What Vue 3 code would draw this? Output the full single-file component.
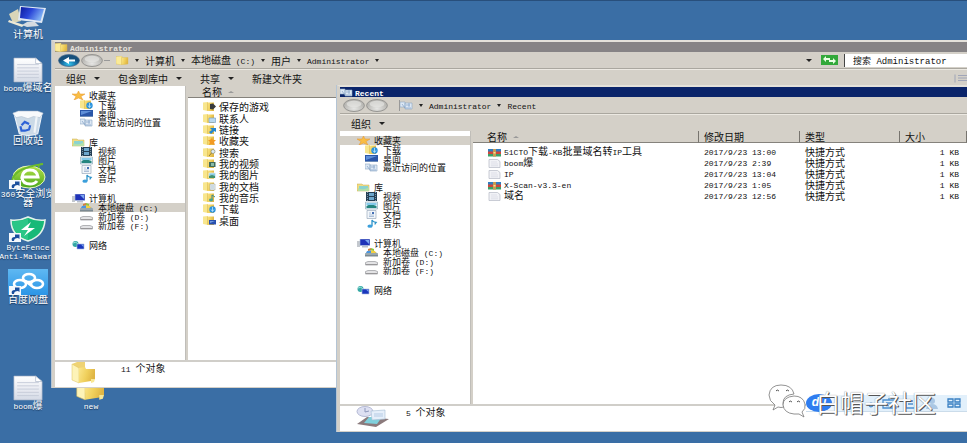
<script setup>
import { h } from 'vue'

// Splits a label into CJK and Latin runs so each gets its own face and size.
const Mixed = (props) =>
  h(
    'span',
    { class: 'mixed' },
    props.text
      .split(/([\x20-\x7e]+)/)
      .filter(Boolean)
      .map((run) => (/^[\x20-\x7e]/.test(run) ? h('span', { class: 'latin' }, run) : run)),
  )
Mixed.props = ['text']

const desktop = [
  { icon: 'pc', label: '计算机', row: 1, col: 1 },
  { icon: 'page', label: 'boom爆域名', row: 2, col: 1 },
  { icon: 'bin', label: '回收站', row: 3, col: 1 },
  { icon: 'browser', label: '360安全浏览\n器', row: 4, col: 1, link: true },
  { icon: 'shield', label: 'ByteFence\nAnti-Malware', row: 5, col: 1, link: true },
  { icon: 'cloud', label: '百度网盘', row: 6, col: 1, link: true },
  { icon: 'page', label: 'boom爆', row: 8, col: 1 },
  { icon: 'folderbig', label: 'new', row: 8, col: 2 },
]

const tree = [
  [['star', '收藏夹'], ['f-down', '下载'], ['desk', '桌面'], ['recent', '最近访问的位置']],
  [['lib', '库'], ['video', '视频'], ['image', '图片'], ['doc', '文档'], ['music', '音乐']],
  [['mini-pc', '计算机'], ['sysdrive', '本地磁盘 (C:)'], ['drive', '新加卷 (D:)'], ['drive', '新加卷 (F:)']],
  [['net', '网络']],
]

const folders = [
  ['game', '保存的游戏'], ['contact', '联系人'], ['link', '链接'], ['fav', '收藏夹'],
  ['search', '搜索'], ['fvideo', '我的视频'], ['fimage', '我的图片'], ['fdoc', '我的文档'],
  ['fmusic', '我的音乐'], ['f-down', '下载'], ['fdesk', '桌面'],
]

const crumbs = ['计算机', '本地磁盘 (C:)', '用户', 'Administrator']
const commands = [['组织', true], ['包含到库中', true], ['共享', true], ['新建文件夹', false]]

const files = [
  ['rar', '51CTO下载-KB批量域名转IP工具', '2017/9/23 13:00'],
  ['file', 'boom爆', '2017/9/23 2:39'],
  ['file', 'IP', '2017/9/23 13:04'],
  ['rar', 'X-Scan-v3.3-en', '2017/9/23 1:05'],
  ['file', '域名', '2017/9/23 12:56'],
]
</script>

<template>
  <main class="screen">
    <svg width="0" height="0" class="defs" aria-hidden="true">
      <defs>
        <linearGradient id="g-folder" x1="0" x2="1" y2="0.3"><stop offset="0" stop-color="#fbe68c" /><stop offset="0.55" stop-color="#f0d05c" /><stop offset="1" stop-color="#dfb544" /></linearGradient>
        <linearGradient id="g-screen" x1="0" x2="1" y2="0.4"><stop offset="0" stop-color="#0a1a9c" /><stop offset="0.5" stop-color="#2a46d8" /><stop offset="1" stop-color="#7fb0f4" /></linearGradient>
        <linearGradient id="g-page" x2="0" y2="1"><stop offset="0" stop-color="#fff" /><stop offset="1" stop-color="#d5dae6" /></linearGradient>
        <radialGradient id="g-back" cy="0.8"><stop offset="0" stop-color="#36c6ee" /><stop offset="0.6" stop-color="#1779ae" /><stop offset="1" stop-color="#17517c" /></radialGradient>
        <radialGradient id="g-fwd" cy="0.75"><stop offset="0" stop-color="#e6e6e4" /><stop offset="1" stop-color="#b9b8b4" /></radialGradient>
        <linearGradient id="g-green" x2="0" y2="1"><stop offset="0" stop-color="#b6e24a" /><stop offset="1" stop-color="#4aa81c" /></linearGradient>
        <linearGradient id="g-sky" x2="0" y2="1"><stop offset="0" stop-color="#5fb8f2" /><stop offset="1" stop-color="#2b95e6" /></linearGradient>
      </defs>
      <symbol id="base" viewBox="0 0 13 9"><path d="M0 .5 5 0v9L0 8z" fill="#f8e68e" /><path d="M4 .5h7V9H4z" fill="url(#g-folder)" /><path d="M4.500.5v8" stroke="#d8b650" stroke-width=".5" /></symbol>
      <symbol id="folder" viewBox="0 0 13 9"><path d="M0 .5 6 0v9L0 8z" fill="#fbeb98" stroke="#d9ba55" stroke-width=".4" /><path d="M5.500 1.500H12V8l-6.500.8z" fill="url(#g-folder)" stroke="#d9ba55" stroke-width=".4" /></symbol>
      <symbol id="folderbig" viewBox="0 0 26 22"><path d="M1 2 6 0h8v15H6z" fill="#efd374" /><path d="M1 2 8 6v15L1 18z" fill="#fdf3b8" stroke="#dfc05c" stroke-width=".5" /><path d="M8 6l6-1 1 2h9v10l-4 2-12 2z" fill="url(#g-folder)" /><path d="M20 17h4l-1 3-3 1z" fill="#f8e794" /></symbol>
      <symbol id="pc" viewBox="0 0 40 24"><path d="M1 9 10 4l3 12-8 2z" fill="#d9d5b8" /><path d="M12 1 38 3l-4 15-24-3z" fill="#dfe8f4" /><path d="M13 2 36 4l-3.500 12L12 13z" fill="url(#g-screen)" /><path d="M19 17h8l4 4-12 1-5-2z" fill="#d5dbe0" /><path d="M1 15l15 5-2 2L0 17z" fill="#ece9d6" /></symbol>
      <symbol id="page" viewBox="0 0 28 24"><path d="M1 1h20l6 5v17H1z" fill="url(#g-page)" stroke="#a9b3c6" stroke-width=".6" /><path d="M21 1l6 5h-6z" fill="#fff" stroke="#a9b3c6" stroke-width=".6" /><path d="M4 7h20M4 10h20M4 13h20M4 16h20M4 19h20" stroke="#c4cad8" stroke-width=".8" /></symbol>
      <symbol id="bin" viewBox="0 0 30 24"><path d="M2 3h26l-4 19q-9 3-17 0z" fill="#d3dfea" fill-opacity=".95" stroke="#eef4fa" /><path d="M1 3 6 1h18l5 2-3 4-6-1-5 2-6-2-5 1z" fill="#f8fafc" stroke="#aebccc" stroke-width=".5" /><path d="M9 14l3-3 4 2M8 15l1 4h4M17 14l-1 4-3 1" fill="none" stroke="#2d62d6" stroke-width="2" /><path d="M23 6l-2 15" stroke="#fff" stroke-opacity=".7" stroke-width="2" /></symbol>
      <symbol id="browser" viewBox="0 0 38 26"><ellipse cx="20" cy="14" rx="16" ry="11" fill="url(#g-green)" stroke="#e6f7c0" /><path d="M29 14H13q1-7 8-7 7 0 8 7zM13 15q1 6 8 6 5 0 7-3" fill="none" stroke="#fff" stroke-width="3" /><path d="M3 18Q5 5 34 1q-6 0-4 4" fill="none" stroke="#6bbb2b" stroke-width="1.800" /></symbol>
      <symbol id="shield" viewBox="0 0 38 26"><path d="M19 1q8 4 17 3-1 16-17 21Q2 20 2 4q9 1 17-3z" fill="#17b978" stroke="#e2f2ea" stroke-width="1.600" /><path d="M19 2v22Q4 19 3 5q9 1 16-3z" fill="#35cc8d" fill-opacity=".7" /><path d="M22 6l-10 8h7l-4 6 11-8h-7z" fill="#fff" /></symbol>
      <symbol id="cloud" viewBox="0 0 40 26"><path d="M0 0h40v26H0z" fill="url(#g-sky)" /><g fill="none" stroke="#fff" stroke-width="2.600"><ellipse cx="21" cy="9" rx="6" ry="4" /><ellipse cx="12" cy="15" rx="6" ry="4" /><ellipse cx="29" cy="15" rx="6" ry="4" /><path d="M17 12l7 5" /></g></symbol>
      <symbol id="shortcut" viewBox="0 0 12 9"><path d="M0 0h12v9H0z" fill="#f4f8fc" /><path d="M3 8Q1.500 4 6 4V1.500h4.500V6L9 5Q5 5 5 8z" fill="#1a4f9e" /></symbol>
      <symbol id="star" viewBox="0 0 13 9"><path d="M6.500 0 8 3h5L9 5.500 11 9 6.500 7 2 9l2-3.500L0 3h5z" fill="#f8bd45" stroke="#e8952a" stroke-width=".5" /></symbol>
      <symbol id="f-down" viewBox="0 0 13 9"><use href="#base" /><circle cx="9.500" cy="5.500" r="3.200" fill="#2c94de" /><path d="M9.500 3v4M8 5.500l1.500 2 1.500-2" stroke="#d5f0ff" fill="none" stroke-width=".7" /></symbol>
      <symbol id="desk" viewBox="0 0 13 9"><path d="M0 1h13v7H0z" fill="#2a56a8" /><path d="M1 2h11L1 6z" fill="#5f8fd8" /><path d="M0 7h13v1H0z" fill="#6f8db8" /></symbol>
      <symbol id="recent" viewBox="0 0 13 9"><path d="M0 1h5v5H0zM5 2h7v6H5z" fill="#dde8f4" stroke="#8ba5c5" stroke-width=".6" /><path d="M2 3l3 4h6M6 4h4M9 2v4" stroke="#7f9fc6" fill="none" stroke-width=".7" /></symbol>
      <symbol id="lib" viewBox="0 0 13 9"><path d="M0 1h5l1 1h6v6H0z" fill="#f1dc83" stroke="#c9ad52" stroke-width=".5" /><path d="M2 3h9v4H2z" fill="#8bd3cf" /><path d="M1 5q6 3 11-1v4H1z" fill="#b4dfa6" /></symbol>
      <symbol id="video" viewBox="0 0 13 9"><path d="M1 0h11v9H1z" fill="#243e54" /><path d="M4 1h5v3H4zM4 5h5v3H4z" fill="#6da6cc" /><path d="M2.500 0v9M10.500 0v9" stroke="#8fa9bb" stroke-dasharray="1 1" stroke-width=".8" /></symbol>
      <symbol id="image" viewBox="0 0 13 9"><path d="M.5 1h12v7H.5z" fill="#e4f3fa" stroke="#829fb0" stroke-width=".6" /><path d="M1.500 5q4-3 10 0v2h-10z" fill="#24857f" /><path d="M1.500 2h10v2h-10z" fill="#84c9ea" /></symbol>
      <symbol id="doc" viewBox="0 0 13 9"><path d="M2 .5h9v8H2z" fill="#f2f6fa" stroke="#8b9db2" stroke-width=".6" /><path d="M4 3h2M4 5h5M4 6.500h5" stroke="#8fa9c8" stroke-width=".7" /><path d="M7 2h2v2H7z" fill="#446fb5" /></symbol>
      <symbol id="music" viewBox="0 0 13 9"><path d="M7 7V1q1 2 4 2.500-1 1-1 2" stroke="#2c93ca" stroke-width="1.300" fill="none" /><ellipse cx="5" cy="7.200" rx="2.600" ry="1.600" fill="#3b9fdb" /></symbol>
      <symbol id="mini-pc" viewBox="0 0 13 9"><path d="M0 2h3v6H0z" fill="#c4c8ce" /><path d="M3 0h10v6.500H3z" fill="#1f32b8" stroke="#b4c3dc" stroke-width=".6" /><path d="M8 1h4v4z" fill="#7ba5f0" /><path d="M5 7h6v1.500H5z" fill="#b8bfca" /></symbol>
      <symbol id="sysdrive" viewBox="0 0 13 9"><path d="M0 5.500 3 4h7l3 1.500v3H0z" fill="#7c8a92" /><path d="M0 5.500h13v1H0z" fill="#b9c4c6" /><path d="M3 1l3-1v2.500L3 3z" fill="#d7813c" /><path d="M6 0l3 1v2L6 2.500z" fill="#8ec63f" /><path d="M2 3l4-.5V5H1z" fill="#4b96de" /><path d="M6 2.500l4 .5 1 2H6z" fill="#f4cf43" /></symbol>
      <symbol id="drive" viewBox="0 0 13 9"><path d="M.5 5.500 3 4.500h7l2.500 1V8H.5z" fill="#e3e3e5" stroke="#98999d" stroke-width=".7" /><path d="M1 7.500h11" stroke="#8c8a8c" stroke-width=".8" /></symbol>
      <symbol id="net" viewBox="0 0 13 9"><circle cx="3.500" cy="3" r="3" fill="#33a8a4" /><path d="M1 2q3-2 5 1" stroke="#a2e4df" fill="none" /><path d="M5 3h7v5H5z" fill="#1a37bd" stroke="#a9bbdf" stroke-width=".6" /><path d="M9 3.500h2.500V6z" fill="#7fa8f0" /></symbol>
      <symbol id="game" viewBox="0 0 13 9"><use href="#base" /><path d="M7 2l3-.5 3 3-3 3-3-.5z" fill="#383a3c" /></symbol>
      <symbol id="contact" viewBox="0 0 13 9"><use href="#base" /><path d="M6 4h6.500v4.500H6z" fill="#b9d9f0" stroke="#6e99c0" stroke-width=".6" /></symbol>
      <symbol id="link" viewBox="0 0 13 9"><use href="#base" /><path d="M7 3h6v4l-2-1-3 3-2-2 3-2z" fill="#2487d0" /></symbol>
      <symbol id="fav" viewBox="0 0 13 9"><use href="#base" /><path d="M9 2l1 2h3l-2 2 1 3-3-1-3 1 1-3-2-2h2z" fill="#f39a22" /></symbol>
      <symbol id="search" viewBox="0 0 13 9"><use href="#base" /><circle cx="10" cy="3.500" r="2" fill="#dcecf4" stroke="#8d8c75" stroke-width=".7" /><path d="M8.500 5 6 8" stroke="#8d7a43" /></symbol>
      <symbol id="fvideo" viewBox="0 0 13 9"><use href="#base" /><path d="M6 3h6.500v5H6z" fill="#416c5c" /><path d="M8 4h3v3H8z" fill="#89bba8" /></symbol>
      <symbol id="fimage" viewBox="0 0 13 9"><use href="#base" /><path d="M6 3h6.500v5H6z" fill="#8ecbe3" stroke="#e7f3f6" stroke-width=".7" /><path d="M6 6l3-1 3 1v2H6z" fill="#42926f" /></symbol>
      <symbol id="fdoc" viewBox="0 0 13 9"><use href="#base" /><path d="M7 2h5v6H7z" fill="#eef3f4" stroke="#9aa8a8" stroke-width=".6" /><path d="M8 4h3M8 6h3" stroke="#7da2bd" stroke-width=".6" /></symbol>
      <symbol id="fmusic" viewBox="0 0 13 9"><use href="#base" /><path d="M9 7V2l3 2" stroke="#368c92" fill="none" /><ellipse cx="8" cy="7" rx="2" ry="1.400" fill="#45a392" /></symbol>
      <symbol id="fdesk" viewBox="0 0 13 9"><use href="#base" /><path d="M6 4h7v4.500H6z" fill="#284fae" /><path d="M7 5h5l-5 2z" fill="#719be0" /></symbol>
      <symbol id="rar" viewBox="0 0 13 9"><path d="M0 1h13v3H0z" fill="#317dc0" /><path d="M0 3.500h13v2.500H0z" fill="#d0473b" /><path d="M0 6h13v2.500H0z" fill="#3ba068" /><path d="M5 1h3v7.500H5z" fill="#c99b50" /><path d="M5.500 4h2v1.500h-2z" fill="#f3df8d" /></symbol>
      <symbol id="file" viewBox="0 0 13 9"><path d="M1 .5h8.500L12 2.500v6H1z" fill="#f1f2f6" stroke="#b4b9c4" stroke-width=".7" /><path d="M3 3h6M3 5h7M3 6.800h7" stroke="#d6d9e2" stroke-width=".7" /></symbol>
      <symbol id="recentbig" viewBox="0 0 34 22"><path d="M1 18l10-7 22 2-13 8z" fill="#8b7a7c" /><path d="M8 17l5-6 13 0-5 7z" fill="#7fd0dc" /><ellipse cx="9" cy="5.500" rx="8" ry="5" fill="#dde0f2" stroke="#b4b9d4" /><path d="M9 2v4l4-1" stroke="#8d98bb" fill="none" /><path d="M15 5l14-1v9l-13 1z" fill="#e6effa" stroke="#a5bdd3" stroke-width=".6" /><path d="M18 8h9M18 10h9" stroke="#b5cbe4" /></symbol>
      <symbol id="back" viewBox="0 0 22 13"><ellipse cx="11" cy="6.500" rx="10.500" ry="6" fill="url(#g-back)" stroke="#46698a" stroke-width=".7" /><path d="M5 6.500 11 3v2.500h6v2h-6V10z" fill="#fff" /></symbol>
      <symbol id="round" viewBox="0 0 22 13"><ellipse cx="11" cy="6.500" rx="10.400" ry="6" fill="url(#g-fwd)" stroke="#908f8c" stroke-width=".9" /><ellipse cx="11" cy="5" rx="7.500" ry="3.300" fill="#e6e5e2" fill-opacity=".7" /></symbol>
      <symbol id="refresh" viewBox="0 0 17 10"><path d="M0 0h17v10H0z" fill="#32a83a" /><path d="M2 4l3-3v2h4v2H5v2zM15 6l-3 3V7H8V5h4V3z" fill="#eaffe4" /></symbol>
      <symbol id="views" viewBox="0 0 13 8"><path d="M1 0v8M4 1h9M4 3.500h9M4 6h9" stroke="#9aa0b6" stroke-width=".9" /></symbol>
      <symbol id="bubbles" viewBox="0 0 38 34"><g fill="#fff" stroke="#777" stroke-width=".8"><path d="M7 21Q1 17 1 11 2 1 13 1q11 0 13 9-11 1-11 9 0 2 1 4-3 1-6 0l-5 3z" /><path d="M34 28q4-3 3-8-2-8-11-8-11 1-11 9 1 8 11 9h5l5 3z" /></g><path d="M8 7q1-2 3 0M18 7q1-2 3 0M21 18q1-2 3 0M29 18q1-2 3 0" fill="none" stroke="#555" /></symbol>
      <symbol id="du" viewBox="0 0 26 18"><ellipse cx="13" cy="9" rx="13" ry="9" fill="#2f7df0" /></symbol>
      <symbol id="keys" viewBox="0 0 74 12"><g fill="none" stroke="#4d90cf" stroke-width="1.300"><circle cx="5" cy="8" r="1.800" /><path d="M17 3h13v8H17zM20 6h7M20 8.500h7M23 1v2M40 1v10h9V1M42 4h5M42 7h5" /></g><circle cx="66" cy="4" r="3" fill="#a9c7e4" /><path d="M60 12q1-5 6-5t6 5z" fill="#a9c7e4" /></symbol>
      <symbol id="grid" viewBox="0 0 14 10"><path d="M1 1h5v3H1zM8 1h5v3H8zM1 6h5v3H1zM8 6h5v3H8z" fill="none" stroke="#397fc2" stroke-width="1.300" /></symbol>
    </svg>

    <nav class="desktop" aria-label="桌面">
      <a v-for="(d, i) in desktop" :key="i" href="#" class="shortcut" :style="{ gridRow: d.row, gridColumn: d.col }">
        <span class="shortcut-art">
          <svg class="art"><use :href="'#' + d.icon" /></svg>
          <svg v-if="d.link" class="badge"><use href="#shortcut" /></svg>
        </span>
        <Mixed class="shortcut-label" :text="d.label" />
      </a>
    </nav>

    <section class="window window-back">
      <header class="title title-idle"><svg class="ico"><use href="#folder" /></svg><Mixed text="Administrator" /></header>
      <div class="address">
        <button class="nav" aria-label="后退"><svg><use href="#back" /></svg></button>
        <button class="nav" aria-label="前进"><svg><use href="#round" /></svg></button>
        <i class="dash"></i>
        <div class="path">
          <svg class="ico"><use href="#folder" /></svg>
          <i class="caret"></i>
          <template v-for="c in crumbs" :key="c"><a href="#"><Mixed :text="c" /></a><i class="caret"></i></template>
        </div>
        <i class="caret wide"></i>
        <button class="refresh" aria-label="刷新"><svg><use href="#refresh" /></svg></button>
        <input class="query" type="text" value="搜索 Administrator" aria-label="搜索" />
      </div>
      <div class="commands">
        <button v-for="[label, menu] in commands" :key="label"><Mixed :text="label" /><i v-if="menu" class="caret wide"></i></button>
        <svg class="ico views"><use href="#views" /></svg>
      </div>
      <div class="body">
        <aside class="tree">
          <ul v-for="(group, g) in tree" :key="g">
            <li v-for="([icon, label], n) in group" :key="n" :class="{ child: n > 0, chosen: g === 2 && n === 1 }">
              <svg class="ico"><use :href="'#' + icon" /></svg><Mixed :text="label" />
            </li>
          </ul>
        </aside>
        <div class="pane">
          <div class="heading"><Mixed text="名称" /><i class="sort"></i></div>
          <ul class="folders">
            <li v-for="[icon, label] in folders" :key="label"><svg class="ico"><use :href="'#' + icon" /></svg><Mixed :text="label" /></li>
          </ul>
        </div>
      </div>
      <footer class="status"><svg class="status-art"><use href="#folderbig" /></svg><Mixed text="11 个对象" /></footer>
    </section>

    <section class="window window-front">
      <header class="title title-active"><svg class="ico"><use href="#recent" /></svg><Mixed text="Recent" /></header>
      <div class="address">
        <button class="nav" aria-label="后退"><svg><use href="#round" /></svg></button>
        <button class="nav" aria-label="前进"><svg><use href="#round" /></svg></button>
        <div class="path">
          <svg class="ico"><use href="#recent" /></svg>
          <i class="caret"></i><a href="#"><Mixed text="Administrator" /></a>
          <i class="caret"></i><a href="#"><Mixed text="Recent" /></a>
        </div>
      </div>
      <div class="commands"><button><Mixed text="组织" /><i class="caret wide"></i></button></div>
      <div class="body">
        <aside class="tree">
          <ul v-for="(group, g) in tree" :key="g">
            <li v-for="([icon, label], n) in group" :key="n" :class="{ child: n > 0, chosen: g === 0 && n === 0 }">
              <svg class="ico"><use :href="'#' + icon" /></svg><Mixed :text="label" />
            </li>
          </ul>
        </aside>
        <div class="pane">
          <table class="files">
            <thead>
              <tr><th class="c-name"><Mixed text="名称" /><i class="sort"></i></th><th class="c-date"><Mixed text="修改日期" /></th><th class="c-type"><Mixed text="类型" /></th><th class="c-size"><Mixed text="大小" /></th></tr>
            </thead>
            <tbody>
              <tr v-for="[icon, name, date] in files" :key="name">
                <td class="c-name"><svg class="ico"><use :href="'#' + icon" /></svg><Mixed :text="name" /></td>
                <td><Mixed :text="date" /></td>
                <td><Mixed text="快捷方式" /></td>
                <td class="size"><Mixed text="1 KB" /></td>
              </tr>
            </tbody>
          </table>
        </div>
      </div>
      <footer class="status"><svg class="status-art"><use href="#recentbig" /></svg><Mixed text="5 个对象" /></footer>
    </section>

    <div class="ime">
      <span class="du"><svg><use href="#du" /></svg><b>du</b></span>
      <svg class="keys"><use href="#keys" /></svg>
      <svg class="grid"><use href="#grid" /></svg>
    </div>
    <div class="brand"><svg><use href="#bubbles" /></svg><span>白帽子社区</span></div>
  </main>
</template>

<style>
body { margin: 0; }
.mixed { white-space: pre; }
.mixed .latin { font-family: "Liberation Mono", monospace; font-size: 8px; }
</style>

<style scoped>
.screen {
  position: relative;
  min-height: 100vh;
  box-sizing: border-box;
  overflow: hidden;
  border-top: 1px solid #284f7c;
  background: #3a6ea5;
  color: #111;
  font-family: "Noto Sans CJK SC", sans-serif;
  font-size: 10px;
  line-height: 9px;
}
.defs { display: block; }
button { border: 0; padding: 0; background: none; font: inherit; color: inherit; }
a { color: inherit; text-decoration: none; }
ul { list-style: none; margin: 0; padding: 0; }
.ico { width: 13px; height: 9px; flex: none; }

.desktop {
  display: grid;
  grid-template-columns: 56px 56px;
  column-gap: 7px;
  grid-template-rows: repeat(8, 53px);
  padding-top: 3px;
}
.shortcut { display: flex; flex-direction: column; align-items: center; color: #fff; min-width: 0; }
.shortcut-art { position: relative; width: 40px; height: 26px; flex: none; }
.art { display: block; width: 40px; height: 26px; }
.badge { position: absolute; left: 1px; bottom: 0; width: 12px; height: 9px; }
.shortcut-label { line-height: 7px; text-align: center; text-shadow: 0 1px 1px #1c3c62; }

.window {
  position: absolute;
  right: 0;
  display: flex;
  flex-direction: column;
  background: #d4d0c8;
  border-left: 3px solid #d4d0c8;
  border-top: 2px solid #e4e1da;
  box-shadow: -1px 0 0 #b4c4d4;
}
.window-back { left: 52px; top: 39px; bottom: 55px; }
.window-front { left: 337px; top: 84px; bottom: 11px; }
.title { display: flex; align-items: center; gap: 2px; height: 10px; color: #fff; font-weight: bold; flex: none; }
.title-idle { background: #868385; color: #e6e3dd; }
.title-active { background: #0a246a; }
.address {
  display: flex;
  align-items: center;
  box-sizing: border-box;
  height: 17px;
  flex: none;
  padding-left: 3px;
  border-bottom: 1px solid #aaa79f;
}
.nav { width: 22px; height: 13px; margin-right: 1px; }
.nav svg { display: block; width: 22px; height: 13px; }
.dash { width: 6px; height: 1px; background: #999; }
.path { display: flex; align-items: center; gap: 7px; flex: 1; margin-left: 6px; }
.window-front .path { margin-left: 10px; border-left: 1px solid #999; }
.caret { width: 0; height: 0; border: 2px solid transparent; border-top: 3px solid #222; border-bottom: 0; flex: none; }
.path .caret { margin: 0 -1px; }
.caret.wide { border-width: 3px 3px 0; }
.refresh { width: 17px; height: 10px; margin: 0 6px 0 9px; }
.refresh svg { display: block; width: 17px; height: 10px; }
.query {
  width: 123px;
  height: 13px;
  box-sizing: border-box;
  padding: 0 0 0 8px;
  border: 0;
  border-left: 1px solid #444;
  background: #fff;
  color: #111;
  font: 9px "Liberation Mono", "Noto Sans CJK SC", monospace;
}
.commands {
  display: flex;
  align-items: center;
  gap: 18px;
  box-sizing: border-box;
  height: 17px;
  flex: none;
  padding-left: 11px;
  border-top: 1px solid #ece9e2;
}
.commands button { display: flex; align-items: center; gap: 8px; }
.views { margin-left: auto; }

.body { display: flex; flex: 1; min-height: 0; border-bottom: 2px solid #d0cec9; }
.tree { width: 131px; flex: none; box-sizing: border-box; padding-top: 5px; background: #fff; border-right: 1px solid #c0beb9; font-size: 9px; }
.tree ul { margin-bottom: 11px; }
.tree li { display: flex; align-items: center; gap: 4px; height: 9px; padding-left: 17px; }
.tree .child { padding-left: 25px; gap: 5px; }
.chosen { background: #d4d0c8; }
.pane { flex: 1; min-width: 0; margin-left: 2px; background: #fff; }
.heading { display: flex; align-items: center; gap: 6px; height: 11px; padding-left: 14px; background: #d4d0c8; border-bottom: 1px solid #85827c; }
.sort { display: inline-block; width: 0; height: 0; border: 3px solid transparent; border-top: 0; border-bottom: 2px solid #999; }
.folders { display: grid; grid-template-rows: repeat(11, 1fr); height: 125px; padding: 3px 0 0 15px; }
.folders li { display: flex; align-items: center; gap: 3px; }

.files { width: 100%; table-layout: fixed; border-collapse: separate; border-spacing: 0; text-align: left; }
.files th { height: 11px; padding: 0 0 0 5px; font-weight: normal; background: #d4d0c8; border-bottom: 1px solid #85827c; border-right: 1px solid #77746e; }
.files th .sort { margin: 0 0 3px 6px; }
.files th.c-name { width: 211px; padding-left: 14px; }
.c-date { width: 95px; }
.c-type { width: 94px; }
.files tbody tr:first-child td { padding-top: 3px; }
.files td { height: 11px; padding: 0 0 0 5px; }
.files td.c-name { padding-left: 15px; }
.files td .ico { margin-right: 3px; vertical-align: middle; }
.files td.size { text-align: right; padding-right: 8px; }

.status { display: flex; align-items: flex-start; height: 25px; flex: none; padding-left: 16px; background: #fff; line-height: 12px; }
.status-art { width: 26px; height: 22px; margin-right: 24px; }
.window-front .status-art { width: 34px; margin-right: 16px; }
.status { border-bottom: 1px solid #d4d0c8; }

.ime {
  position: absolute;
  right: 0;
  top: 394px;
  width: 161px;
  display: flex;
  align-items: center;
  box-sizing: border-box;
  height: 17px;
  padding-right: 6px;
  background: linear-gradient(90deg, #fff, #e2f0fb 30%);
  border-bottom: 1px solid #cbdcea;
}
.du { display: grid; width: 26px; height: 18px; }
.du svg, .du b { grid-area: 1 / 1; width: 26px; height: 18px; }
.du b { color: #fff; font: italic bold 12px/17px "Liberation Sans", sans-serif; text-align: center; }
.keys { width: 74px; height: 12px; margin-left: 34px; }
.grid { width: 14px; height: 10px; margin-left: auto; }
.brand {
  position: absolute;
  right: 31px;
  top: 383px;
  display: flex;
  align-items: center;
  gap: 10px;
  color: #fff;
  font-size: 24px;
  line-height: 33px;
  text-shadow: 1px 1px 0 #555, 0 0 1px #777;
}
.brand svg { width: 38px; height: 34px; }
</style>
